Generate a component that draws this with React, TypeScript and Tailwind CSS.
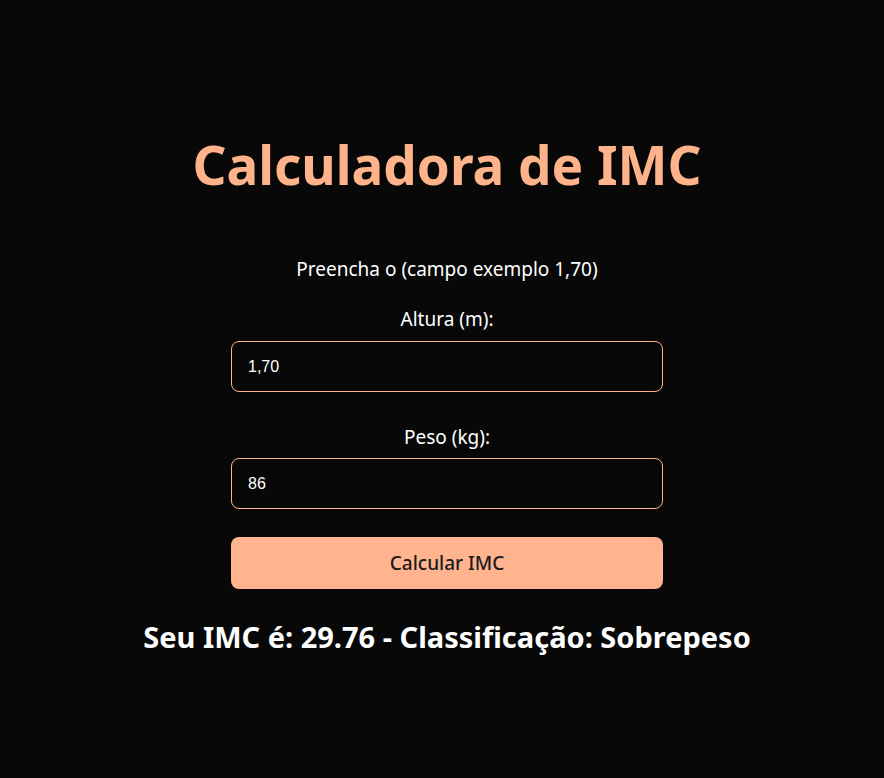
import { useState } from 'react';

export default function App() {
  const [altura, setAltura] = useState('1,70');
  const [peso, setPeso] = useState('86');

  return (
    <div className="min-h-[778px] w-full bg-[#080808] text-white font-['Noto_Sans',sans-serif]">
      <div className="flex flex-col items-center pt-[136px] pl-[10px]">
        <h1 className="text-[53px] leading-[58px] font-bold text-[#ffb38a]">Calculadora de IMC</h1>

        <p className="mt-[63px] text-[19px] leading-[24px] text-white">Preencha o (campo exemplo 1,70)</p>

        <label className="mt-[26px] text-[19px] leading-[24px]">Altura (m):</label>
        <input
          value={altura}
          onChange={(e) => setAltura(e.target.value)}
          className="mt-[10px] w-[432px] h-[51px] rounded-lg border border-[#ffb38a] bg-[#080808] px-4 text-[16px] text-white font-['Liberation_Sans',sans-serif] outline-none"
        />

        <label className="mt-[33px] text-[19px] leading-[24px]">Peso (kg):</label>
        <input
          value={peso}
          onChange={(e) => setPeso(e.target.value)}
          className="mt-[9px] w-[432px] h-[51px] rounded-lg border border-[#ffb38a] bg-[#080808] px-4 text-[16px] text-white font-['Liberation_Sans',sans-serif] outline-none"
        />

        <button className="mt-[28px] w-[432px] h-[52px] rounded-lg bg-[#ffb38f] text-[19px] font-medium text-[#1a1a1a]">
          Calcular IMC
        </button>

        <h2 className="mt-[31px] text-[29px] leading-[34px] font-bold">Seu IMC é: 29.76 - Classificação: Sobrepeso</h2>
      </div>
    </div>
  );
}
